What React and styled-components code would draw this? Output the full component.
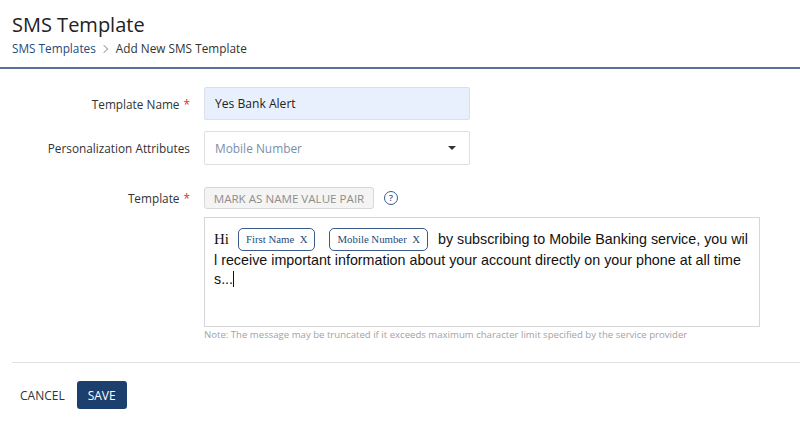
import React, { useState } from 'react';
import styled, { createGlobalStyle } from 'styled-components';

const GlobalStyle = createGlobalStyle`
  body {
    margin: 0;
    background: #fff;
    font-family: "Open Sans", "Noto Sans", sans-serif;
    color: #333;
  }
`;

const Page = styled.div`
  width: 800px;
  height: 437px;
  overflow: hidden;
`;

const Header = styled.div`
  padding: 12px 0 0 12px;
  border-bottom: 2px solid #5a7199;
  height: 55px;
  box-sizing: content-box;
`;

const Title = styled.h1`
  margin: 0;
  font-size: 20px;
  font-weight: 400;
  color: #222;
  line-height: 26px;
`;

const Crumbs = styled.div`
  margin-top: 2px;
  display: flex;
  align-items: center;
  gap: 5px;
  font-size: 11.8px;
  color: #333;
`;

const CrumbLink = styled.a`
  color: #1f4a7c;
  text-decoration: none;
`;

const CrumbSep = styled.span`
  display: inline-block;
  width: 5px;
  height: 5px;
  border-top: 1px solid #a8a8a8;
  border-right: 1px solid #a8a8a8;
  transform: rotate(45deg);
  margin: 2px 4px 0 0;
`;

const Form = styled.div`
  padding: 18px 0 0 0;
  display: flex;
  flex-direction: column;
  gap: 11px;
`;

const Row = styled.div`
  display: grid;
  grid-template-columns: 190px auto;
  column-gap: 14px;
  align-items: ${(p) => (p.$top ? 'start' : 'center')};
  margin-top: ${(p) => p.$mt || 0}px;
`;

const Label = styled.label`
  text-align: right;
  font-size: 11.8px;
  color: #333;
  line-height: ${(p) => p.$lh || 'normal'};
`;

const Req = styled.span`
  color: #d9322e;
  margin-left: 4px;
`;

const TextInput = styled.input`
  width: 266px;
  height: 33px;
  box-sizing: border-box;
  border: 1px solid #dcdfe4;
  border-radius: 2px;
  background: ${(p) => (p.$filled ? '#e8f0fd' : '#fff')};
  padding: 0 10px;
  font-family: "Open Sans", sans-serif;
  font-size: 12.1px;
  color: #222;
  outline: none;
`;

const Select = styled.div`
  width: 266px;
  height: 34px;
  box-sizing: border-box;
  border: 1px solid #dcdfe4;
  border-radius: 2px;
  display: flex;
  align-items: center;
  justify-content: space-between;
  padding: 0 13px 0 10px;
  font-size: 11.9px;
  color: #7d8fa8;
`;

const Caret = styled.span`
  width: 0;
  height: 0;
  border-left: 4px solid transparent;
  border-right: 4px solid transparent;
  border-top: 4px solid #333;
`;

const Field = styled.div`
  display: flex;
  flex-direction: column;
`;

const Tools = styled.div`
  display: flex;
  align-items: center;
  gap: 10px;
`;

const MarkButton = styled.button`
  width: 170px;
  height: 22px;
  padding: 0;
  border: 1px solid #d8d8d8;
  border-radius: 3px;
  background: #f4f4f4;
  color: #8e8e8e;
  font-family: "Open Sans", sans-serif;
  font-size: 11.6px;
`;

const Help = styled.span`
  width: 12px;
  height: 12px;
  border: 1px solid #3a5b8c;
  border-radius: 50%;
  display: inline-flex;
  align-items: center;
  justify-content: center;
  color: #3a5b8c;
  font-size: 9.5px;
  font-weight: 600;
  line-height: 1;
`;

const Editor = styled.div`
  margin-top: 8px;
  width: 556px;
  height: 110px;
  box-sizing: border-box;
  border: 1px solid #d6d6d6;
  padding: 12px 9px;
  font-family: "Liberation Sans", Arial, sans-serif;
  font-size: 14.3px;
  line-height: 19.5px;
  color: #111;
  white-space: nowrap;
`;

const Serif = styled.span`
  font-family: "Liberation Serif", serif;
  font-size: 15px;
`;

const Chip = styled.span`
  border: 1px solid #3a5b8c;
  border-radius: 5px;
  padding: 4px 7px 5px 7px;
  margin: 0 ${(p) => p.$mr}px 0 ${(p) => p.$ml}px;
  font-family: "Liberation Serif", serif;
  font-size: 10.8px;
  color: #1f4a7c;
  position: relative;
  top: -1px;
`;

const Cursor = styled.span`
  display: inline-block;
  width: 1px;
  height: 16px;
  background: #111;
  vertical-align: -3px;
`;

const Note = styled.div`
  margin-top: 1px;
  font-size: 9.6px;
  color: #a3a3a3;
`;

const Divider = styled.hr`
  margin: 21px 0 0 12px;
  border: none;
  border-top: 1px solid #e1e1e1;
`;

const Footer = styled.div`
  display: flex;
  align-items: center;
  gap: 12px;
  padding: 18px 0 0 20px;
`;

const TextButton = styled.button`
  border: none;
  background: none;
  padding: 0;
  font-family: "Open Sans", sans-serif;
  font-size: 12px;
  color: #333;
`;

const PrimaryButton = styled.button`
  width: 50px;
  height: 28px;
  border: none;
  border-radius: 3px;
  background: #1c3f6e;
  color: #fff;
  font-family: "Open Sans", sans-serif;
  font-size: 12px;
`;

export default function App() {
  const [name, setName] = useState('Yes Bank Alert');

  return (
    <Page>
      <GlobalStyle />
      <Header>
        <Title>SMS Template</Title>
        <Crumbs>
          <CrumbLink href="#">SMS Templates</CrumbLink>
          <CrumbSep />
          <span>Add New SMS Template</span>
        </Crumbs>
      </Header>
      <Form>
        <Row>
          <Label>
            Template Name<Req>*</Req>
          </Label>
          <TextInput $filled value={name} onChange={(e) => setName(e.target.value)} />
        </Row>
        <Row>
          <Label>Personalization Attributes</Label>
          <Select>
            Mobile Number
            <Caret />
          </Select>
        </Row>
        <Row $top $mt={11}>
          <Label $lh="22px">
            Template<Req>*</Req>
          </Label>
          <Field>
            <Tools>
              <MarkButton>MARK AS NAME VALUE PAIR</MarkButton>
              <Help>?</Help>
            </Tools>
            <Editor>
              <Serif>Hi</Serif>
              <Chip $ml={9} $mr={0}>First Name&nbsp; X</Chip>
              <Chip $ml={14} $mr={10}>Mobile Number&nbsp; X</Chip>
              by subscribing to Mobile Banking service, you wil
              <br />
              l receive important information about your account directly on your phone at all time
              <br />
              s...
              <Cursor />
            </Editor>
            <Note>
              Note: The message may be truncated if it exceeds maximum character limit specified by the service provider
            </Note>
          </Field>
        </Row>
      </Form>
      <Divider />
      <Footer>
        <TextButton>CANCEL</TextButton>
        <PrimaryButton>SAVE</PrimaryButton>
      </Footer>
    </Page>
  );
}
